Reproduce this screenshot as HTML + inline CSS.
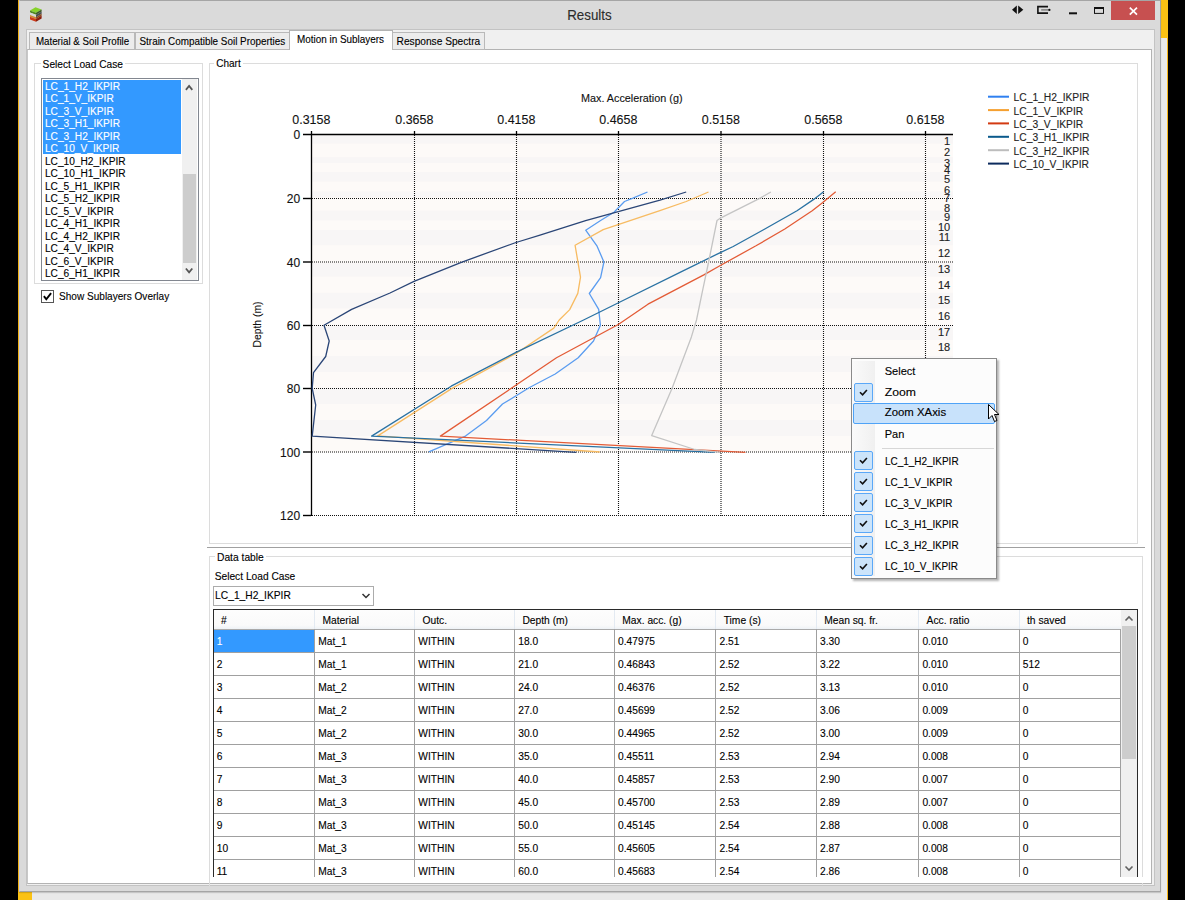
<!DOCTYPE html><html><head><meta charset="utf-8"><style>
html,body{margin:0;padding:0;width:1185px;height:900px;overflow:hidden;background:#000;position:relative;font-family:"Liberation Sans",sans-serif;}
div{box-sizing:border-box;}
.a{position:absolute;}
</style></head><body>
<div class="a" style="left:18px;top:0px;width:1150px;height:900px;background:#e9e9e9;border-left:1px solid #f7b617;border-right:1px solid #f7b617;"></div>
<div class="a" style="left:1161px;top:0px;width:7px;height:38px;background:#fbc214;"></div>
<div class="a" style="left:18px;top:892px;width:14px;height:8px;background:#fbc214;"></div>
<div class="a" style="left:19px;top:0px;width:1142px;height:892px;background:#dadada;border:1px solid #a5a5a5;border-left-color:#c8cde0;box-shadow:0 1px 1px rgba(0,0,0,0.15);"></div>
<svg class="a" style="left:24px;top:2px" width="24" height="24" viewBox="0 0 24 24"><polygon points="6,8.6 11.5,5.2 17.6,7.4 12,10.8" fill="#86d22a"/><polygon points="6,8.6 12,10.8 12,12.8 6,10.6" fill="#4f8a1e"/><polygon points="12,10.8 17.6,7.4 17.6,9.4 12,12.8" fill="#3c5e22"/><polygon points="6,10.6 12,12.8 12,15.2 6,13" fill="#d4d8d4"/><polygon points="12,12.8 17.6,9.4 17.6,11.8 12,15.2" fill="#4a5050"/><polygon points="6,13 12,15.2 12,17 6,14.8" fill="#cf8a2e"/><polygon points="12,15.2 17.6,11.8 17.6,13.6 12,17" fill="#8a4a1a"/><polygon points="6,14.8 12,17 12,19.8 6,17.6" fill="#cc3a1a"/><polygon points="12,17 17.6,13.6 17.6,16.4 12,19.8" fill="#8a1e0e"/></svg>
<svg class="a" style="left:1008px;top:3px" width="150" height="18" viewBox="0 0 150 18"><polygon points="4,6.8 8.8,2.6 8.8,10.9" fill="#111"/><polygon points="10.2,2.6 15.3,6.8 10.2,10.9" fill="#111"/><path d="M40,3.6 L29.9,3.6 L29.9,10.1 L40,10.1" fill="none" stroke="#111" stroke-width="1.6"/><rect x="33.2" y="6.2" width="7.8" height="1.4" fill="#777"/><circle cx="41.4" cy="6.9" r="1.1" fill="#111"/><rect x="61" y="9.3" width="8" height="2" fill="#111"/><rect x="86.5" y="4.5" width="9" height="5.9" fill="none" stroke="#111" stroke-width="1"/><rect x="86" y="4" width="10" height="2" fill="#111"/></svg>
<div class="a" style="left:1111px;top:1px;width:44px;height:19px;background:#c75050;"></div>
<svg class="a" style="left:1111px;top:1px" width="44" height="19"><path d="M18.8,6.6 L26,13.6 M26,6.6 L18.8,13.6" stroke="#fff" stroke-width="1.7"/></svg>
<div class="a" style="left:26px;top:29px;width:1129px;height:857px;background:#f0f0f0;border:1px solid #c3c3c3;"></div>
<div class="a" style="left:27px;top:49px;width:1125px;height:835px;background:#fff;border:1px solid #b3b3b3;border-left-color:#c8c8c8;"></div>
<div class="a" style="left:29px;top:32px;width:106px;height:18px;background:#ececec;border:1px solid #b9b9b9;"></div>
<div class="a" style="left:135px;top:32px;width:155px;height:18px;background:#ececec;border:1px solid #b9b9b9;"></div>
<div class="a" style="left:289px;top:30px;width:104px;height:20px;background:#fff;border:1px solid #b3b3b3;border-bottom:none;"></div>
<div class="a" style="left:392px;top:32px;width:93px;height:18px;background:#ececec;border:1px solid #b9b9b9;"></div>
<div class="a" style="left:34px;top:63px;width:169px;height:221px;border:1px solid #dcdcdc;"></div>
<div class="a" style="left:41px;top:58px;width:84px;height:10px;background:#fff"></div>
<div class="a" style="left:41px;top:78px;width:158px;height:203px;background:#fff;border:1px solid #828790;"></div>
<div class="a" style="left:43px;top:79.5px;width:138px;height:74.5px;background:#3399ff;"></div>
<div class="a" style="left:182px;top:79px;width:15px;height:201px;background:#f0f0f0;"></div>
<div class="a" style="left:183px;top:173.5px;width:12.5px;height:89px;background:#cdcdcd;"></div>
<svg class="a" style="left:182px;top:79px" width="15" height="201"><path d="M3.9,10.8 L7.1,7 L10.3,10.8" fill="none" stroke="#555" stroke-width="1.8"/><path d="M3.9,189.5 L7.1,193.3 L10.3,189.5" fill="none" stroke="#555" stroke-width="1.8"/></svg>
<div class="a" style="left:41px;top:289.5px;width:13px;height:13px;background:#fff;border:1px solid #555;"></div>
<svg class="a" style="left:41px;top:289.5px" width="13" height="13"><path d="M2.9,6.2 L5.3,9.3 L10.1,3.1" fill="none" stroke="#000" stroke-width="1.9"/></svg>
<div class="a" style="left:209px;top:63px;width:929px;height:481px;border:1px solid #dcdcdc;"></div>
<div class="a" style="left:214px;top:58px;width:29px;height:10px;background:#fff"></div>
<svg width="1185" height="900" style="position:absolute;left:0;top:0" shape-rendering="auto">
<rect x="311.5" y="134.8" width="641.5" height="317.5" fill="#fdfaf8"/>
<rect x="311.5" y="134.5" width="641.5" height="9.2" fill="#f8f6f6"/>
<rect x="311.5" y="157.2" width="641.5" height="5.8" fill="#f8f6f6"/>
<rect x="311.5" y="172.0" width="641.5" height="9.7" fill="#f8f6f6"/>
<rect x="311.5" y="191.3" width="641.5" height="5.8" fill="#f8f6f6"/>
<rect x="311.5" y="210.7" width="641.5" height="9.6" fill="#f8f6f6"/>
<rect x="311.5" y="230.0" width="641.5" height="15.2" fill="#f8f6f6"/>
<rect x="311.5" y="263.2" width="641.5" height="13.5" fill="#f8f6f6"/>
<rect x="311.5" y="292.8" width="641.5" height="15.5" fill="#f8f6f6"/>
<rect x="311.5" y="325.7" width="641.5" height="14.2" fill="#f8f6f6"/>
<rect x="311.5" y="356.0" width="641.5" height="16.0" fill="#f8f6f6"/>
<rect x="311.5" y="388.0" width="641.5" height="16.0" fill="#f8f6f6"/>
<rect x="311.5" y="420.0" width="641.5" height="16.0" fill="#f8f6f6"/>
<line x1="414.5" y1="135" x2="414.5" y2="516" stroke="#111" stroke-width="1.1" stroke-dasharray="1,1"/>
<line x1="516.5" y1="135" x2="516.5" y2="516" stroke="#111" stroke-width="1.1" stroke-dasharray="1,1"/>
<line x1="618.5" y1="135" x2="618.5" y2="516" stroke="#111" stroke-width="1.1" stroke-dasharray="1,1"/>
<line x1="721.0" y1="135" x2="721.0" y2="516" stroke="#111" stroke-width="1.1" stroke-dasharray="1,1"/>
<line x1="823.5" y1="135" x2="823.5" y2="516" stroke="#111" stroke-width="1.1" stroke-dasharray="1,1"/>
<line x1="925.5" y1="135" x2="925.5" y2="516" stroke="#111" stroke-width="1.1" stroke-dasharray="1,1"/>
<line x1="312" y1="198.5" x2="953" y2="198.5" stroke="#111" stroke-width="1.1" stroke-dasharray="1,1"/>
<line x1="312" y1="262.0" x2="953" y2="262.0" stroke="#111" stroke-width="1.1" stroke-dasharray="1,1"/>
<line x1="312" y1="325.5" x2="953" y2="325.5" stroke="#111" stroke-width="1.1" stroke-dasharray="1,1"/>
<line x1="312" y1="388.5" x2="953" y2="388.5" stroke="#111" stroke-width="1.1" stroke-dasharray="1,1"/>
<line x1="312" y1="452.0" x2="953" y2="452.0" stroke="#111" stroke-width="1.1" stroke-dasharray="1,1"/>
<line x1="312" y1="515.5" x2="953" y2="515.5" stroke="#111" stroke-width="1.1" stroke-dasharray="1,1"/>
<line x1="303" y1="134.5" x2="953" y2="134.5" stroke="#000" stroke-width="1.3"/>
<line x1="311.5" y1="131" x2="311.5" y2="516" stroke="#000" stroke-width="1.3"/>
<line x1="303" y1="198.5" x2="311" y2="198.5" stroke="#000" stroke-width="1.4"/>
<line x1="303" y1="262.0" x2="311" y2="262.0" stroke="#000" stroke-width="1.4"/>
<line x1="303" y1="325.5" x2="311" y2="325.5" stroke="#000" stroke-width="1.4"/>
<line x1="303" y1="388.5" x2="311" y2="388.5" stroke="#000" stroke-width="1.4"/>
<line x1="303" y1="452.0" x2="311" y2="452.0" stroke="#000" stroke-width="1.4"/>
<line x1="303" y1="515.5" x2="311" y2="515.5" stroke="#000" stroke-width="1.4"/>
<line x1="414.5" y1="131" x2="414.5" y2="134.5" stroke="#000" stroke-width="1.3"/>
<line x1="516.5" y1="131" x2="516.5" y2="134.5" stroke="#000" stroke-width="1.3"/>
<line x1="618.5" y1="131" x2="618.5" y2="134.5" stroke="#000" stroke-width="1.3"/>
<line x1="721.0" y1="131" x2="721.0" y2="134.5" stroke="#000" stroke-width="1.3"/>
<line x1="823.5" y1="131" x2="823.5" y2="134.5" stroke="#000" stroke-width="1.3"/>
<line x1="925.5" y1="131" x2="925.5" y2="134.5" stroke="#000" stroke-width="1.3"/>
<polyline points="647.5,192.0 632.9,198.2 624.5,201.5 614.0,212.2 600.6,220.5 585.7,230.2 597.1,246.2 603.9,262.0 600.6,277.7 589.3,293.5 598.7,309.4 600.4,325.3 593.5,341.0 578.2,357.8 555.2,374.0 529.5,387.5 502.5,404.0 486.5,420.5 465.5,436.1 428.8,451.8" fill="none" stroke="#5a9cf0" stroke-width="1.3" stroke-linejoin="round"/>
<polyline points="708.5,192.0 686.2,201.5 659.9,210.7 603.2,229.6 575.1,245.3 580.5,277.2 577.8,293.4 569.7,309.6 559.2,320.0 553.8,328.1 516.0,353.5 452.0,388.4 377.8,435.9 599.8,452.0" fill="none" stroke="#f7bb62" stroke-width="1.3" stroke-linejoin="round"/>
<polyline points="835.7,191.8 822.8,202.5 812.2,210.8 784.8,229.0 756.0,245.8 720.3,265.5 704.3,274.6 648.0,304.2 618.3,324.5 556.5,357.8 440.4,436.1 745.4,452.3" fill="none" stroke="#e35b36" stroke-width="1.3" stroke-linejoin="round"/>
<polyline points="823.6,191.8 813.7,199.4 797.0,210.8 763.5,229.8 733.2,246.5 720.3,252.6 680.0,272.3 621.0,301.5 583.6,320.0 516.0,352.4 451.2,386.2 371.6,436.1 715.0,452.3" fill="none" stroke="#2a72a3" stroke-width="1.3" stroke-linejoin="round"/>
<polyline points="770.9,192.0 758.7,198.9 720.9,217.8 717.0,220.5 708.8,261.0 702.0,293.4 696.5,320.0 691.4,336.9 672.0,388.4 651.7,435.6 694.8,449.5 720.0,452.3" fill="none" stroke="#c4c4c4" stroke-width="1.3" stroke-linejoin="round"/>
<polyline points="686.2,192.0 660.0,200.2 585.6,220.7 540.0,235.1 516.0,242.5 461.3,262.3 414.0,281.4 390.0,293.0 351.6,309.4 324.0,325.2 329.2,341.0 325.7,356.5 313.5,372.7 312.2,388.3 315.7,405.0 312.2,436.1 576.0,452.3" fill="none" stroke="#2b4677" stroke-width="1.3" stroke-linejoin="round"/>
<rect x="988" y="95.7" width="21" height="2" fill="#3080f0"/>
<rect x="988" y="109.1" width="21" height="2" fill="#f5a030"/>
<rect x="988" y="122.4" width="21" height="2" fill="#d33a12"/>
<rect x="988" y="135.8" width="21" height="2" fill="#0b5a8c"/>
<rect x="988" y="149.2" width="21" height="2" fill="#bdbdbd"/>
<rect x="988" y="162.6" width="21" height="2" fill="#0d2b5e"/>
</svg>
<div class="a" style="left:207px;top:547px;width:938px;height:1px;background:#a0a0a0;"></div>
<div class="a" style="left:209px;top:556px;width:934px;height:330px;border:1px solid #dcdcdc;border-bottom:none;"></div>
<div class="a" style="left:215px;top:551px;width:51px;height:10px;background:#fff"></div>
<div class="a" style="left:212.5px;top:586px;width:161px;height:20px;background:#fff;border:1px solid #acacac;"></div>
<svg class="a" style="left:360px;top:590px" width="12" height="12"><path d="M2.5,4 L6,7.5 L9.5,4" fill="none" stroke="#333" stroke-width="1.5"/></svg>
<div class="a" style="left:212.5px;top:609px;width:925.5px;height:268.5px;background:#fff;border:1.3px solid #2a2a2a;border-bottom:none;border-top-width:1px;"></div>
<div class="a" style="left:214px;top:610px;width:907px;height:19px;background:linear-gradient(to bottom,#fdfdfd,#fafafa 80%,#eef2f6);"></div>
<div class="a" style="left:314.2px;top:610px;width:1px;height:18.5px;background:#e3eaf2;"></div>
<div class="a" style="left:414.2px;top:610px;width:1px;height:18.5px;background:#e3eaf2;"></div>
<div class="a" style="left:514.1px;top:610px;width:1px;height:18.5px;background:#e3eaf2;"></div>
<div class="a" style="left:614.0px;top:610px;width:1px;height:18.5px;background:#e3eaf2;"></div>
<div class="a" style="left:715.4px;top:610px;width:1px;height:18.5px;background:#e3eaf2;"></div>
<div class="a" style="left:815.9px;top:610px;width:1px;height:18.5px;background:#e3eaf2;"></div>
<div class="a" style="left:918.3px;top:610px;width:1px;height:18.5px;background:#e3eaf2;"></div>
<div class="a" style="left:1018.7px;top:610px;width:1px;height:18.5px;background:#e3eaf2;"></div>
<div class="a" style="left:214px;top:628.5px;width:906.5px;height:1px;background:#aaaaaa;"></div>
<div class="a" style="left:214px;top:652px;width:906.5px;height:1px;background:#a0a0a0;"></div>
<div class="a" style="left:214px;top:675px;width:906.5px;height:1px;background:#a0a0a0;"></div>
<div class="a" style="left:214px;top:698px;width:906.5px;height:1px;background:#a0a0a0;"></div>
<div class="a" style="left:214px;top:721px;width:906.5px;height:1px;background:#a0a0a0;"></div>
<div class="a" style="left:214px;top:744px;width:906.5px;height:1px;background:#a0a0a0;"></div>
<div class="a" style="left:214px;top:767px;width:906.5px;height:1px;background:#a0a0a0;"></div>
<div class="a" style="left:214px;top:790px;width:906.5px;height:1px;background:#a0a0a0;"></div>
<div class="a" style="left:214px;top:813px;width:906.5px;height:1px;background:#a0a0a0;"></div>
<div class="a" style="left:214px;top:836px;width:906.5px;height:1px;background:#a0a0a0;"></div>
<div class="a" style="left:214px;top:859px;width:906.5px;height:1px;background:#a0a0a0;"></div>
<div class="a" style="left:314px;top:629px;width:1px;height:248px;background:#a0a0a0;"></div>
<div class="a" style="left:414px;top:629px;width:1px;height:248px;background:#a0a0a0;"></div>
<div class="a" style="left:514px;top:629px;width:1px;height:248px;background:#a0a0a0;"></div>
<div class="a" style="left:614px;top:629px;width:1px;height:248px;background:#a0a0a0;"></div>
<div class="a" style="left:715px;top:629px;width:1px;height:248px;background:#a0a0a0;"></div>
<div class="a" style="left:816px;top:629px;width:1px;height:248px;background:#a0a0a0;"></div>
<div class="a" style="left:918px;top:629px;width:1px;height:248px;background:#a0a0a0;"></div>
<div class="a" style="left:1019px;top:629px;width:1px;height:248px;background:#a0a0a0;"></div>
<div class="a" style="left:1120px;top:629px;width:1px;height:248px;background:#a0a0a0;"></div>
<div class="a" style="left:214px;top:629.5px;width:100.2px;height:22.3px;background:#3399ff;"></div>
<div class="a" style="left:210px;top:877px;width:941px;height:6px;background:#fff;"></div>
<div class="a" style="left:1121px;top:610px;width:16px;height:267px;background:#f0f0f0;"></div>
<div class="a" style="left:1122px;top:626px;width:14px;height:133px;background:#cdcdcd;"></div>
<svg class="a" style="left:1121px;top:610px" width="16" height="267"><path d="M4.5,10.5 L8,7 L11.5,10.5" fill="none" stroke="#606060" stroke-width="1.6"/><path d="M4.5,256.5 L8,260 L11.5,256.5" fill="none" stroke="#606060" stroke-width="1.6"/></svg>
<div class="a" style="left:851px;top:358px;width:146px;height:221px;background:#fcfcfc;border:1px solid #8a8a8a;box-shadow:2px 2px 2px rgba(0,0,0,0.3);"></div>
<div class="a" style="left:852px;top:361px;width:23px;height:215px;background:linear-gradient(to right,#fafafa,#f0f0f0);"></div>
<div class="a" style="left:882px;top:448px;width:112px;height:1px;background:#d7d7d7;"></div>
<div class="a" style="left:853px;top:402.5px;width:142px;height:21px;background:#c8e2fb;border:1px solid #4fa3f7;border-radius:2px;"></div>
<div class="a" style="left:854px;top:382.5px;width:19px;height:19px;background:#cce4fa;border:1px solid #5aa8f8;border-radius:2px;"></div>
<svg class="a" style="left:854px;top:382.5px" width="19" height="19"><path d="M6,9.3 L8.6,11.9 L12.9,7" fill="none" stroke="#111" stroke-width="1.6"/></svg>
<div class="a" style="left:854px;top:451.3px;width:19px;height:19px;background:#cce4fa;border:1px solid #5aa8f8;border-radius:2px;"></div>
<svg class="a" style="left:854px;top:451.30px" width="19" height="19"><path d="M6,9.3 L8.6,11.9 L12.9,7" fill="none" stroke="#111" stroke-width="1.6"/></svg>
<div class="a" style="left:854px;top:472.35px;width:19px;height:19px;background:#cce4fa;border:1px solid #5aa8f8;border-radius:2px;"></div>
<svg class="a" style="left:854px;top:472.35px" width="19" height="19"><path d="M6,9.3 L8.6,11.9 L12.9,7" fill="none" stroke="#111" stroke-width="1.6"/></svg>
<div class="a" style="left:854px;top:493.40000000000003px;width:19px;height:19px;background:#cce4fa;border:1px solid #5aa8f8;border-radius:2px;"></div>
<svg class="a" style="left:854px;top:493.40px" width="19" height="19"><path d="M6,9.3 L8.6,11.9 L12.9,7" fill="none" stroke="#111" stroke-width="1.6"/></svg>
<div class="a" style="left:854px;top:514.45px;width:19px;height:19px;background:#cce4fa;border:1px solid #5aa8f8;border-radius:2px;"></div>
<svg class="a" style="left:854px;top:514.45px" width="19" height="19"><path d="M6,9.3 L8.6,11.9 L12.9,7" fill="none" stroke="#111" stroke-width="1.6"/></svg>
<div class="a" style="left:854px;top:535.5000000000001px;width:19px;height:19px;background:#cce4fa;border:1px solid #5aa8f8;border-radius:2px;"></div>
<svg class="a" style="left:854px;top:535.50px" width="19" height="19"><path d="M6,9.3 L8.6,11.9 L12.9,7" fill="none" stroke="#111" stroke-width="1.6"/></svg>
<div class="a" style="left:854px;top:556.5500000000001px;width:19px;height:19px;background:#cce4fa;border:1px solid #5aa8f8;border-radius:2px;"></div>
<svg class="a" style="left:854px;top:556.55px" width="19" height="19"><path d="M6,9.3 L8.6,11.9 L12.9,7" fill="none" stroke="#111" stroke-width="1.6"/></svg>
<svg class="a" style="left:0;top:0" width="1185" height="900" font-family="Liberation Sans" stroke-width="0.12" paint-order="stroke">
<defs><clipPath id="gridclip"><rect x="213" y="610" width="908" height="267"/></clipPath></defs>
<text x="567.20" y="19.70" font-size="14.5" fill="#2b2b2b" stroke="#2b2b2b" textLength="44.50" lengthAdjust="spacingAndGlyphs" >Results</text>
<text x="35.90" y="44.90" font-size="11" fill="#000" stroke="#000" textLength="93.30" lengthAdjust="spacingAndGlyphs" >Material &amp; Soil Profile</text>
<text x="139.50" y="44.90" font-size="11" fill="#000" stroke="#000" textLength="145.70" lengthAdjust="spacingAndGlyphs" >Strain Compatible Soil Properties</text>
<text x="297.00" y="43.20" font-size="11" fill="#000" stroke="#000" textLength="87.00" lengthAdjust="spacingAndGlyphs" >Motion in Sublayers</text>
<text x="396.60" y="44.90" font-size="11" fill="#000" stroke="#000" textLength="83.60" lengthAdjust="spacingAndGlyphs" >Response Spectra</text>
<text x="42.60" y="67.50" font-size="11" fill="#000" stroke="#000" textLength="80.40" lengthAdjust="spacingAndGlyphs" >Select Load Case</text>
<text transform="translate(44.90,90.00) scale(0.9246,1)" x="0" y="0" font-size="11" fill="#fff" stroke="#fff" text-anchor="start" >LC_1_H2_IKPIR</text>
<text transform="translate(44.90,102.47) scale(0.9246,1)" x="0" y="0" font-size="11" fill="#fff" stroke="#fff" text-anchor="start" >LC_1_V_IKPIR</text>
<text transform="translate(44.90,114.94) scale(0.9246,1)" x="0" y="0" font-size="11" fill="#fff" stroke="#fff" text-anchor="start" >LC_3_V_IKPIR</text>
<text transform="translate(44.90,127.41) scale(0.9246,1)" x="0" y="0" font-size="11" fill="#fff" stroke="#fff" text-anchor="start" >LC_3_H1_IKPIR</text>
<text transform="translate(44.90,139.88) scale(0.9246,1)" x="0" y="0" font-size="11" fill="#fff" stroke="#fff" text-anchor="start" >LC_3_H2_IKPIR</text>
<text transform="translate(44.90,152.35) scale(0.9246,1)" x="0" y="0" font-size="11" fill="#fff" stroke="#fff" text-anchor="start" >LC_10_V_IKPIR</text>
<text transform="translate(44.90,164.82) scale(0.9246,1)" x="0" y="0" font-size="11" fill="#000" stroke="#000" text-anchor="start" >LC_10_H2_IKPIR</text>
<text transform="translate(44.90,177.29) scale(0.9246,1)" x="0" y="0" font-size="11" fill="#000" stroke="#000" text-anchor="start" >LC_10_H1_IKPIR</text>
<text transform="translate(44.90,189.76) scale(0.9246,1)" x="0" y="0" font-size="11" fill="#000" stroke="#000" text-anchor="start" >LC_5_H1_IKPIR</text>
<text transform="translate(44.90,202.23) scale(0.9246,1)" x="0" y="0" font-size="11" fill="#000" stroke="#000" text-anchor="start" >LC_5_H2_IKPIR</text>
<text transform="translate(44.90,214.70) scale(0.9246,1)" x="0" y="0" font-size="11" fill="#000" stroke="#000" text-anchor="start" >LC_5_V_IKPIR</text>
<text transform="translate(44.90,227.17) scale(0.9246,1)" x="0" y="0" font-size="11" fill="#000" stroke="#000" text-anchor="start" >LC_4_H1_IKPIR</text>
<text transform="translate(44.90,239.64) scale(0.9246,1)" x="0" y="0" font-size="11" fill="#000" stroke="#000" text-anchor="start" >LC_4_H2_IKPIR</text>
<text transform="translate(44.90,252.11) scale(0.9246,1)" x="0" y="0" font-size="11" fill="#000" stroke="#000" text-anchor="start" >LC_4_V_IKPIR</text>
<text transform="translate(44.90,264.58) scale(0.9246,1)" x="0" y="0" font-size="11" fill="#000" stroke="#000" text-anchor="start" >LC_6_V_IKPIR</text>
<text transform="translate(44.90,277.05) scale(0.9246,1)" x="0" y="0" font-size="11" fill="#000" stroke="#000" text-anchor="start" >LC_6_H1_IKPIR</text>
<text x="59.00" y="299.60" font-size="11" fill="#000" stroke="#000" textLength="110.20" lengthAdjust="spacingAndGlyphs" >Show Sublayers Overlay</text>
<text x="216.20" y="67.00" font-size="11" fill="#000" stroke="#000" textLength="24.50" lengthAdjust="spacingAndGlyphs" >Chart</text>
<text x="292.30" y="124.00" font-size="13" fill="#111" stroke="#111" textLength="38.10" lengthAdjust="spacingAndGlyphs" >0.3158</text>
<text x="395.30" y="124.00" font-size="13" fill="#111" stroke="#111" textLength="38.10" lengthAdjust="spacingAndGlyphs" >0.3658</text>
<text x="497.30" y="124.00" font-size="13" fill="#111" stroke="#111" textLength="38.10" lengthAdjust="spacingAndGlyphs" >0.4158</text>
<text x="599.30" y="124.00" font-size="13" fill="#111" stroke="#111" textLength="38.10" lengthAdjust="spacingAndGlyphs" >0.4658</text>
<text x="701.80" y="124.00" font-size="13" fill="#111" stroke="#111" textLength="38.10" lengthAdjust="spacingAndGlyphs" >0.5158</text>
<text x="804.30" y="124.00" font-size="13" fill="#111" stroke="#111" textLength="38.10" lengthAdjust="spacingAndGlyphs" >0.5658</text>
<text x="906.30" y="124.00" font-size="13" fill="#111" stroke="#111" textLength="38.10" lengthAdjust="spacingAndGlyphs" >0.6158</text>
<text transform="translate(300.10,139.00) scale(0.9250,1)" x="0" y="0" font-size="13" fill="#111" stroke="#111" text-anchor="end" >0</text>
<text transform="translate(300.10,203.00) scale(0.9250,1)" x="0" y="0" font-size="13" fill="#111" stroke="#111" text-anchor="end" >20</text>
<text transform="translate(300.10,266.50) scale(0.9250,1)" x="0" y="0" font-size="13" fill="#111" stroke="#111" text-anchor="end" >40</text>
<text transform="translate(300.10,330.00) scale(0.9250,1)" x="0" y="0" font-size="13" fill="#111" stroke="#111" text-anchor="end" >60</text>
<text transform="translate(300.10,393.00) scale(0.9250,1)" x="0" y="0" font-size="13" fill="#111" stroke="#111" text-anchor="end" >80</text>
<text transform="translate(300.10,456.50) scale(0.9250,1)" x="0" y="0" font-size="13" fill="#111" stroke="#111" text-anchor="end" >100</text>
<text transform="translate(300.10,520.00) scale(0.9250,1)" x="0" y="0" font-size="13" fill="#111" stroke="#111" text-anchor="end" >120</text>
<text x="581.00" y="101.90" font-size="11" fill="#111" stroke="#111" textLength="101.50" lengthAdjust="spacingAndGlyphs" >Max. Acceleration (g)</text>
<text transform="translate(260.6,347.5) rotate(-90)" x="0" y="0" font-size="11.5" fill="#111" stroke="#111" textLength="46" lengthAdjust="spacingAndGlyphs">Depth (m)</text>
<text x="950.20" y="144.80" font-size="11" fill="#222" stroke="#222" text-anchor="end" >1</text>
<text x="950.20" y="155.80" font-size="11" fill="#222" stroke="#222" text-anchor="end" >2</text>
<text x="950.20" y="166.80" font-size="11" fill="#222" stroke="#222" text-anchor="end" >3</text>
<text x="950.20" y="173.70" font-size="11" fill="#222" stroke="#222" text-anchor="end" >4</text>
<text x="950.20" y="182.70" font-size="11" fill="#222" stroke="#222" text-anchor="end" >5</text>
<text x="950.20" y="194.10" font-size="11" fill="#222" stroke="#222" text-anchor="end" >6</text>
<text x="950.20" y="201.80" font-size="11" fill="#222" stroke="#222" text-anchor="end" >7</text>
<text x="950.20" y="212.10" font-size="11" fill="#222" stroke="#222" text-anchor="end" >8</text>
<text x="950.20" y="221.00" font-size="11" fill="#222" stroke="#222" text-anchor="end" >9</text>
<text x="950.20" y="231.20" font-size="11" fill="#222" stroke="#222" text-anchor="end" >10</text>
<text x="950.20" y="241.40" font-size="11" fill="#222" stroke="#222" text-anchor="end" >11</text>
<text x="950.20" y="256.80" font-size="11" fill="#222" stroke="#222" text-anchor="end" >12</text>
<text x="950.20" y="273.40" font-size="11" fill="#222" stroke="#222" text-anchor="end" >13</text>
<text x="950.20" y="288.70" font-size="11" fill="#222" stroke="#222" text-anchor="end" >14</text>
<text x="950.20" y="304.10" font-size="11" fill="#222" stroke="#222" text-anchor="end" >15</text>
<text x="950.20" y="320.10" font-size="11" fill="#222" stroke="#222" text-anchor="end" >16</text>
<text x="950.20" y="336.00" font-size="11" fill="#222" stroke="#222" text-anchor="end" >17</text>
<text x="950.20" y="351.30" font-size="11" fill="#222" stroke="#222" text-anchor="end" >18</text>
<text transform="translate(1013.60,101.30) scale(0.9348,1)" x="0" y="0" font-size="11" fill="#222" stroke="#222" text-anchor="start" >LC_1_H2_IKPIR</text>
<text transform="translate(1013.60,114.67) scale(0.9348,1)" x="0" y="0" font-size="11" fill="#222" stroke="#222" text-anchor="start" >LC_1_V_IKPIR</text>
<text transform="translate(1013.60,128.04) scale(0.9348,1)" x="0" y="0" font-size="11" fill="#222" stroke="#222" text-anchor="start" >LC_3_V_IKPIR</text>
<text transform="translate(1013.60,141.41) scale(0.9348,1)" x="0" y="0" font-size="11" fill="#222" stroke="#222" text-anchor="start" >LC_3_H1_IKPIR</text>
<text transform="translate(1013.60,154.78) scale(0.9348,1)" x="0" y="0" font-size="11" fill="#222" stroke="#222" text-anchor="start" >LC_3_H2_IKPIR</text>
<text transform="translate(1013.60,168.15) scale(0.9348,1)" x="0" y="0" font-size="11" fill="#222" stroke="#222" text-anchor="start" >LC_10_V_IKPIR</text>
<text x="217.00" y="560.50" font-size="11" fill="#000" stroke="#000" textLength="46.80" lengthAdjust="spacingAndGlyphs" >Data table</text>
<text x="214.70" y="579.50" font-size="11" fill="#000" stroke="#000" textLength="80.60" lengthAdjust="spacingAndGlyphs" >Select Load Case</text>
<text x="215.10" y="598.50" font-size="11" fill="#000" stroke="#000" textLength="75.70" lengthAdjust="spacingAndGlyphs" >LC_1_H2_IKPIR</text>
<text transform="translate(220.90,623.80) scale(0.9349,1)" x="0" y="0" font-size="11" fill="#000" stroke="#000" text-anchor="start" >#</text>
<text transform="translate(322.50,623.80) scale(0.9349,1)" x="0" y="0" font-size="11" fill="#000" stroke="#000" text-anchor="start" >Material</text>
<text transform="translate(422.50,623.80) scale(0.9349,1)" x="0" y="0" font-size="11" fill="#000" stroke="#000" text-anchor="start" >Outc.</text>
<text transform="translate(522.40,623.80) scale(0.9349,1)" x="0" y="0" font-size="11" fill="#000" stroke="#000" text-anchor="start" >Depth (m)</text>
<text transform="translate(622.30,623.80) scale(0.9349,1)" x="0" y="0" font-size="11" fill="#000" stroke="#000" text-anchor="start" >Max. acc. (g)</text>
<text transform="translate(723.70,623.80) scale(0.9349,1)" x="0" y="0" font-size="11" fill="#000" stroke="#000" text-anchor="start" >Time (s)</text>
<text transform="translate(824.20,623.80) scale(0.9349,1)" x="0" y="0" font-size="11" fill="#000" stroke="#000" text-anchor="start" >Mean sq. fr.</text>
<text transform="translate(926.60,623.80) scale(0.9349,1)" x="0" y="0" font-size="11" fill="#000" stroke="#000" text-anchor="start" >Acc. ratio</text>
<text transform="translate(1027.00,623.80) scale(0.9349,1)" x="0" y="0" font-size="11" fill="#000" stroke="#000" text-anchor="start" >th saved</text>
<g clip-path="url(#gridclip)">
<text transform="translate(216.70,644.80) scale(0.9295,1)" x="0" y="0" font-size="11" fill="#fff" stroke="#fff" text-anchor="start" >1</text>
<text transform="translate(318.30,644.80) scale(0.9295,1)" x="0" y="0" font-size="11" fill="#000" stroke="#000" text-anchor="start" >Mat_1</text>
<text transform="translate(418.30,644.80) scale(0.9295,1)" x="0" y="0" font-size="11" fill="#000" stroke="#000" text-anchor="start" >WITHIN</text>
<text transform="translate(518.20,644.80) scale(0.9295,1)" x="0" y="0" font-size="11" fill="#000" stroke="#000" text-anchor="start" >18.0</text>
<text transform="translate(618.10,644.80) scale(0.9295,1)" x="0" y="0" font-size="11" fill="#000" stroke="#000" text-anchor="start" >0.47975</text>
<text transform="translate(719.50,644.80) scale(0.9295,1)" x="0" y="0" font-size="11" fill="#000" stroke="#000" text-anchor="start" >2.51</text>
<text transform="translate(820.00,644.80) scale(0.9295,1)" x="0" y="0" font-size="11" fill="#000" stroke="#000" text-anchor="start" >3.30</text>
<text transform="translate(922.40,644.80) scale(0.9295,1)" x="0" y="0" font-size="11" fill="#000" stroke="#000" text-anchor="start" >0.010</text>
<text transform="translate(1022.80,644.80) scale(0.9295,1)" x="0" y="0" font-size="11" fill="#000" stroke="#000" text-anchor="start" >0</text>
<text transform="translate(216.70,667.80) scale(0.9295,1)" x="0" y="0" font-size="11" fill="#000" stroke="#000" text-anchor="start" >2</text>
<text transform="translate(318.30,667.80) scale(0.9295,1)" x="0" y="0" font-size="11" fill="#000" stroke="#000" text-anchor="start" >Mat_1</text>
<text transform="translate(418.30,667.80) scale(0.9295,1)" x="0" y="0" font-size="11" fill="#000" stroke="#000" text-anchor="start" >WITHIN</text>
<text transform="translate(518.20,667.80) scale(0.9295,1)" x="0" y="0" font-size="11" fill="#000" stroke="#000" text-anchor="start" >21.0</text>
<text transform="translate(618.10,667.80) scale(0.9295,1)" x="0" y="0" font-size="11" fill="#000" stroke="#000" text-anchor="start" >0.46843</text>
<text transform="translate(719.50,667.80) scale(0.9295,1)" x="0" y="0" font-size="11" fill="#000" stroke="#000" text-anchor="start" >2.52</text>
<text transform="translate(820.00,667.80) scale(0.9295,1)" x="0" y="0" font-size="11" fill="#000" stroke="#000" text-anchor="start" >3.22</text>
<text transform="translate(922.40,667.80) scale(0.9295,1)" x="0" y="0" font-size="11" fill="#000" stroke="#000" text-anchor="start" >0.010</text>
<text transform="translate(1022.80,667.80) scale(0.9295,1)" x="0" y="0" font-size="11" fill="#000" stroke="#000" text-anchor="start" >512</text>
<text transform="translate(216.70,690.80) scale(0.9295,1)" x="0" y="0" font-size="11" fill="#000" stroke="#000" text-anchor="start" >3</text>
<text transform="translate(318.30,690.80) scale(0.9295,1)" x="0" y="0" font-size="11" fill="#000" stroke="#000" text-anchor="start" >Mat_2</text>
<text transform="translate(418.30,690.80) scale(0.9295,1)" x="0" y="0" font-size="11" fill="#000" stroke="#000" text-anchor="start" >WITHIN</text>
<text transform="translate(518.20,690.80) scale(0.9295,1)" x="0" y="0" font-size="11" fill="#000" stroke="#000" text-anchor="start" >24.0</text>
<text transform="translate(618.10,690.80) scale(0.9295,1)" x="0" y="0" font-size="11" fill="#000" stroke="#000" text-anchor="start" >0.46376</text>
<text transform="translate(719.50,690.80) scale(0.9295,1)" x="0" y="0" font-size="11" fill="#000" stroke="#000" text-anchor="start" >2.52</text>
<text transform="translate(820.00,690.80) scale(0.9295,1)" x="0" y="0" font-size="11" fill="#000" stroke="#000" text-anchor="start" >3.13</text>
<text transform="translate(922.40,690.80) scale(0.9295,1)" x="0" y="0" font-size="11" fill="#000" stroke="#000" text-anchor="start" >0.010</text>
<text transform="translate(1022.80,690.80) scale(0.9295,1)" x="0" y="0" font-size="11" fill="#000" stroke="#000" text-anchor="start" >0</text>
<text transform="translate(216.70,713.80) scale(0.9295,1)" x="0" y="0" font-size="11" fill="#000" stroke="#000" text-anchor="start" >4</text>
<text transform="translate(318.30,713.80) scale(0.9295,1)" x="0" y="0" font-size="11" fill="#000" stroke="#000" text-anchor="start" >Mat_2</text>
<text transform="translate(418.30,713.80) scale(0.9295,1)" x="0" y="0" font-size="11" fill="#000" stroke="#000" text-anchor="start" >WITHIN</text>
<text transform="translate(518.20,713.80) scale(0.9295,1)" x="0" y="0" font-size="11" fill="#000" stroke="#000" text-anchor="start" >27.0</text>
<text transform="translate(618.10,713.80) scale(0.9295,1)" x="0" y="0" font-size="11" fill="#000" stroke="#000" text-anchor="start" >0.45699</text>
<text transform="translate(719.50,713.80) scale(0.9295,1)" x="0" y="0" font-size="11" fill="#000" stroke="#000" text-anchor="start" >2.52</text>
<text transform="translate(820.00,713.80) scale(0.9295,1)" x="0" y="0" font-size="11" fill="#000" stroke="#000" text-anchor="start" >3.06</text>
<text transform="translate(922.40,713.80) scale(0.9295,1)" x="0" y="0" font-size="11" fill="#000" stroke="#000" text-anchor="start" >0.009</text>
<text transform="translate(1022.80,713.80) scale(0.9295,1)" x="0" y="0" font-size="11" fill="#000" stroke="#000" text-anchor="start" >0</text>
<text transform="translate(216.70,736.80) scale(0.9295,1)" x="0" y="0" font-size="11" fill="#000" stroke="#000" text-anchor="start" >5</text>
<text transform="translate(318.30,736.80) scale(0.9295,1)" x="0" y="0" font-size="11" fill="#000" stroke="#000" text-anchor="start" >Mat_2</text>
<text transform="translate(418.30,736.80) scale(0.9295,1)" x="0" y="0" font-size="11" fill="#000" stroke="#000" text-anchor="start" >WITHIN</text>
<text transform="translate(518.20,736.80) scale(0.9295,1)" x="0" y="0" font-size="11" fill="#000" stroke="#000" text-anchor="start" >30.0</text>
<text transform="translate(618.10,736.80) scale(0.9295,1)" x="0" y="0" font-size="11" fill="#000" stroke="#000" text-anchor="start" >0.44965</text>
<text transform="translate(719.50,736.80) scale(0.9295,1)" x="0" y="0" font-size="11" fill="#000" stroke="#000" text-anchor="start" >2.52</text>
<text transform="translate(820.00,736.80) scale(0.9295,1)" x="0" y="0" font-size="11" fill="#000" stroke="#000" text-anchor="start" >3.00</text>
<text transform="translate(922.40,736.80) scale(0.9295,1)" x="0" y="0" font-size="11" fill="#000" stroke="#000" text-anchor="start" >0.009</text>
<text transform="translate(1022.80,736.80) scale(0.9295,1)" x="0" y="0" font-size="11" fill="#000" stroke="#000" text-anchor="start" >0</text>
<text transform="translate(216.70,759.80) scale(0.9295,1)" x="0" y="0" font-size="11" fill="#000" stroke="#000" text-anchor="start" >6</text>
<text transform="translate(318.30,759.80) scale(0.9295,1)" x="0" y="0" font-size="11" fill="#000" stroke="#000" text-anchor="start" >Mat_3</text>
<text transform="translate(418.30,759.80) scale(0.9295,1)" x="0" y="0" font-size="11" fill="#000" stroke="#000" text-anchor="start" >WITHIN</text>
<text transform="translate(518.20,759.80) scale(0.9295,1)" x="0" y="0" font-size="11" fill="#000" stroke="#000" text-anchor="start" >35.0</text>
<text transform="translate(618.10,759.80) scale(0.9295,1)" x="0" y="0" font-size="11" fill="#000" stroke="#000" text-anchor="start" >0.45511</text>
<text transform="translate(719.50,759.80) scale(0.9295,1)" x="0" y="0" font-size="11" fill="#000" stroke="#000" text-anchor="start" >2.53</text>
<text transform="translate(820.00,759.80) scale(0.9295,1)" x="0" y="0" font-size="11" fill="#000" stroke="#000" text-anchor="start" >2.94</text>
<text transform="translate(922.40,759.80) scale(0.9295,1)" x="0" y="0" font-size="11" fill="#000" stroke="#000" text-anchor="start" >0.008</text>
<text transform="translate(1022.80,759.80) scale(0.9295,1)" x="0" y="0" font-size="11" fill="#000" stroke="#000" text-anchor="start" >0</text>
<text transform="translate(216.70,782.80) scale(0.9295,1)" x="0" y="0" font-size="11" fill="#000" stroke="#000" text-anchor="start" >7</text>
<text transform="translate(318.30,782.80) scale(0.9295,1)" x="0" y="0" font-size="11" fill="#000" stroke="#000" text-anchor="start" >Mat_3</text>
<text transform="translate(418.30,782.80) scale(0.9295,1)" x="0" y="0" font-size="11" fill="#000" stroke="#000" text-anchor="start" >WITHIN</text>
<text transform="translate(518.20,782.80) scale(0.9295,1)" x="0" y="0" font-size="11" fill="#000" stroke="#000" text-anchor="start" >40.0</text>
<text transform="translate(618.10,782.80) scale(0.9295,1)" x="0" y="0" font-size="11" fill="#000" stroke="#000" text-anchor="start" >0.45857</text>
<text transform="translate(719.50,782.80) scale(0.9295,1)" x="0" y="0" font-size="11" fill="#000" stroke="#000" text-anchor="start" >2.53</text>
<text transform="translate(820.00,782.80) scale(0.9295,1)" x="0" y="0" font-size="11" fill="#000" stroke="#000" text-anchor="start" >2.90</text>
<text transform="translate(922.40,782.80) scale(0.9295,1)" x="0" y="0" font-size="11" fill="#000" stroke="#000" text-anchor="start" >0.007</text>
<text transform="translate(1022.80,782.80) scale(0.9295,1)" x="0" y="0" font-size="11" fill="#000" stroke="#000" text-anchor="start" >0</text>
<text transform="translate(216.70,805.80) scale(0.9295,1)" x="0" y="0" font-size="11" fill="#000" stroke="#000" text-anchor="start" >8</text>
<text transform="translate(318.30,805.80) scale(0.9295,1)" x="0" y="0" font-size="11" fill="#000" stroke="#000" text-anchor="start" >Mat_3</text>
<text transform="translate(418.30,805.80) scale(0.9295,1)" x="0" y="0" font-size="11" fill="#000" stroke="#000" text-anchor="start" >WITHIN</text>
<text transform="translate(518.20,805.80) scale(0.9295,1)" x="0" y="0" font-size="11" fill="#000" stroke="#000" text-anchor="start" >45.0</text>
<text transform="translate(618.10,805.80) scale(0.9295,1)" x="0" y="0" font-size="11" fill="#000" stroke="#000" text-anchor="start" >0.45700</text>
<text transform="translate(719.50,805.80) scale(0.9295,1)" x="0" y="0" font-size="11" fill="#000" stroke="#000" text-anchor="start" >2.53</text>
<text transform="translate(820.00,805.80) scale(0.9295,1)" x="0" y="0" font-size="11" fill="#000" stroke="#000" text-anchor="start" >2.89</text>
<text transform="translate(922.40,805.80) scale(0.9295,1)" x="0" y="0" font-size="11" fill="#000" stroke="#000" text-anchor="start" >0.007</text>
<text transform="translate(1022.80,805.80) scale(0.9295,1)" x="0" y="0" font-size="11" fill="#000" stroke="#000" text-anchor="start" >0</text>
<text transform="translate(216.70,828.80) scale(0.9295,1)" x="0" y="0" font-size="11" fill="#000" stroke="#000" text-anchor="start" >9</text>
<text transform="translate(318.30,828.80) scale(0.9295,1)" x="0" y="0" font-size="11" fill="#000" stroke="#000" text-anchor="start" >Mat_3</text>
<text transform="translate(418.30,828.80) scale(0.9295,1)" x="0" y="0" font-size="11" fill="#000" stroke="#000" text-anchor="start" >WITHIN</text>
<text transform="translate(518.20,828.80) scale(0.9295,1)" x="0" y="0" font-size="11" fill="#000" stroke="#000" text-anchor="start" >50.0</text>
<text transform="translate(618.10,828.80) scale(0.9295,1)" x="0" y="0" font-size="11" fill="#000" stroke="#000" text-anchor="start" >0.45145</text>
<text transform="translate(719.50,828.80) scale(0.9295,1)" x="0" y="0" font-size="11" fill="#000" stroke="#000" text-anchor="start" >2.54</text>
<text transform="translate(820.00,828.80) scale(0.9295,1)" x="0" y="0" font-size="11" fill="#000" stroke="#000" text-anchor="start" >2.88</text>
<text transform="translate(922.40,828.80) scale(0.9295,1)" x="0" y="0" font-size="11" fill="#000" stroke="#000" text-anchor="start" >0.008</text>
<text transform="translate(1022.80,828.80) scale(0.9295,1)" x="0" y="0" font-size="11" fill="#000" stroke="#000" text-anchor="start" >0</text>
<text transform="translate(216.70,851.80) scale(0.9295,1)" x="0" y="0" font-size="11" fill="#000" stroke="#000" text-anchor="start" >10</text>
<text transform="translate(318.30,851.80) scale(0.9295,1)" x="0" y="0" font-size="11" fill="#000" stroke="#000" text-anchor="start" >Mat_3</text>
<text transform="translate(418.30,851.80) scale(0.9295,1)" x="0" y="0" font-size="11" fill="#000" stroke="#000" text-anchor="start" >WITHIN</text>
<text transform="translate(518.20,851.80) scale(0.9295,1)" x="0" y="0" font-size="11" fill="#000" stroke="#000" text-anchor="start" >55.0</text>
<text transform="translate(618.10,851.80) scale(0.9295,1)" x="0" y="0" font-size="11" fill="#000" stroke="#000" text-anchor="start" >0.45605</text>
<text transform="translate(719.50,851.80) scale(0.9295,1)" x="0" y="0" font-size="11" fill="#000" stroke="#000" text-anchor="start" >2.54</text>
<text transform="translate(820.00,851.80) scale(0.9295,1)" x="0" y="0" font-size="11" fill="#000" stroke="#000" text-anchor="start" >2.87</text>
<text transform="translate(922.40,851.80) scale(0.9295,1)" x="0" y="0" font-size="11" fill="#000" stroke="#000" text-anchor="start" >0.008</text>
<text transform="translate(1022.80,851.80) scale(0.9295,1)" x="0" y="0" font-size="11" fill="#000" stroke="#000" text-anchor="start" >0</text>
<text transform="translate(216.70,874.80) scale(0.9295,1)" x="0" y="0" font-size="11" fill="#000" stroke="#000" text-anchor="start" >11</text>
<text transform="translate(318.30,874.80) scale(0.9295,1)" x="0" y="0" font-size="11" fill="#000" stroke="#000" text-anchor="start" >Mat_3</text>
<text transform="translate(418.30,874.80) scale(0.9295,1)" x="0" y="0" font-size="11" fill="#000" stroke="#000" text-anchor="start" >WITHIN</text>
<text transform="translate(518.20,874.80) scale(0.9295,1)" x="0" y="0" font-size="11" fill="#000" stroke="#000" text-anchor="start" >60.0</text>
<text transform="translate(618.10,874.80) scale(0.9295,1)" x="0" y="0" font-size="11" fill="#000" stroke="#000" text-anchor="start" >0.45683</text>
<text transform="translate(719.50,874.80) scale(0.9295,1)" x="0" y="0" font-size="11" fill="#000" stroke="#000" text-anchor="start" >2.54</text>
<text transform="translate(820.00,874.80) scale(0.9295,1)" x="0" y="0" font-size="11" fill="#000" stroke="#000" text-anchor="start" >2.86</text>
<text transform="translate(922.40,874.80) scale(0.9295,1)" x="0" y="0" font-size="11" fill="#000" stroke="#000" text-anchor="start" >0.008</text>
<text transform="translate(1022.80,874.80) scale(0.9295,1)" x="0" y="0" font-size="11" fill="#000" stroke="#000" text-anchor="start" >0</text>
</g>
<text x="884.70" y="374.90" font-size="11" fill="#000" stroke="#000" textLength="30.70" lengthAdjust="spacingAndGlyphs" >Select</text>
<text x="884.70" y="395.80" font-size="11" fill="#000" stroke="#000" textLength="31.20" lengthAdjust="spacingAndGlyphs" >Zoom</text>
<text x="884.70" y="416.40" font-size="11" fill="#000" stroke="#000" textLength="61.40" lengthAdjust="spacingAndGlyphs" >Zoom XAxis</text>
<text x="884.70" y="437.60" font-size="11" fill="#000" stroke="#000" textLength="19.60" lengthAdjust="spacingAndGlyphs" >Pan</text>
<text transform="translate(885.00,464.60) scale(0.9053,1)" x="0" y="0" font-size="11" fill="#000" stroke="#000" text-anchor="start" >LC_1_H2_IKPIR</text>
<text transform="translate(885.00,485.65) scale(0.9053,1)" x="0" y="0" font-size="11" fill="#000" stroke="#000" text-anchor="start" >LC_1_V_IKPIR</text>
<text transform="translate(885.00,506.70) scale(0.9053,1)" x="0" y="0" font-size="11" fill="#000" stroke="#000" text-anchor="start" >LC_3_V_IKPIR</text>
<text transform="translate(885.00,527.75) scale(0.9053,1)" x="0" y="0" font-size="11" fill="#000" stroke="#000" text-anchor="start" >LC_3_H1_IKPIR</text>
<text transform="translate(885.00,548.80) scale(0.9053,1)" x="0" y="0" font-size="11" fill="#000" stroke="#000" text-anchor="start" >LC_3_H2_IKPIR</text>
<text transform="translate(885.00,569.85) scale(0.9053,1)" x="0" y="0" font-size="11" fill="#000" stroke="#000" text-anchor="start" >LC_10_V_IKPIR</text>
</svg>
<svg class="a" style="left:987px;top:403px" width="14" height="22"><path d="M1.5,1.5 L1.5,16 L5,12.5 L7.5,18.5 L10,17.5 L7.5,11.5 L12,11.5 Z" fill="#fff" stroke="#000" stroke-width="1"/></svg>
</body></html>
